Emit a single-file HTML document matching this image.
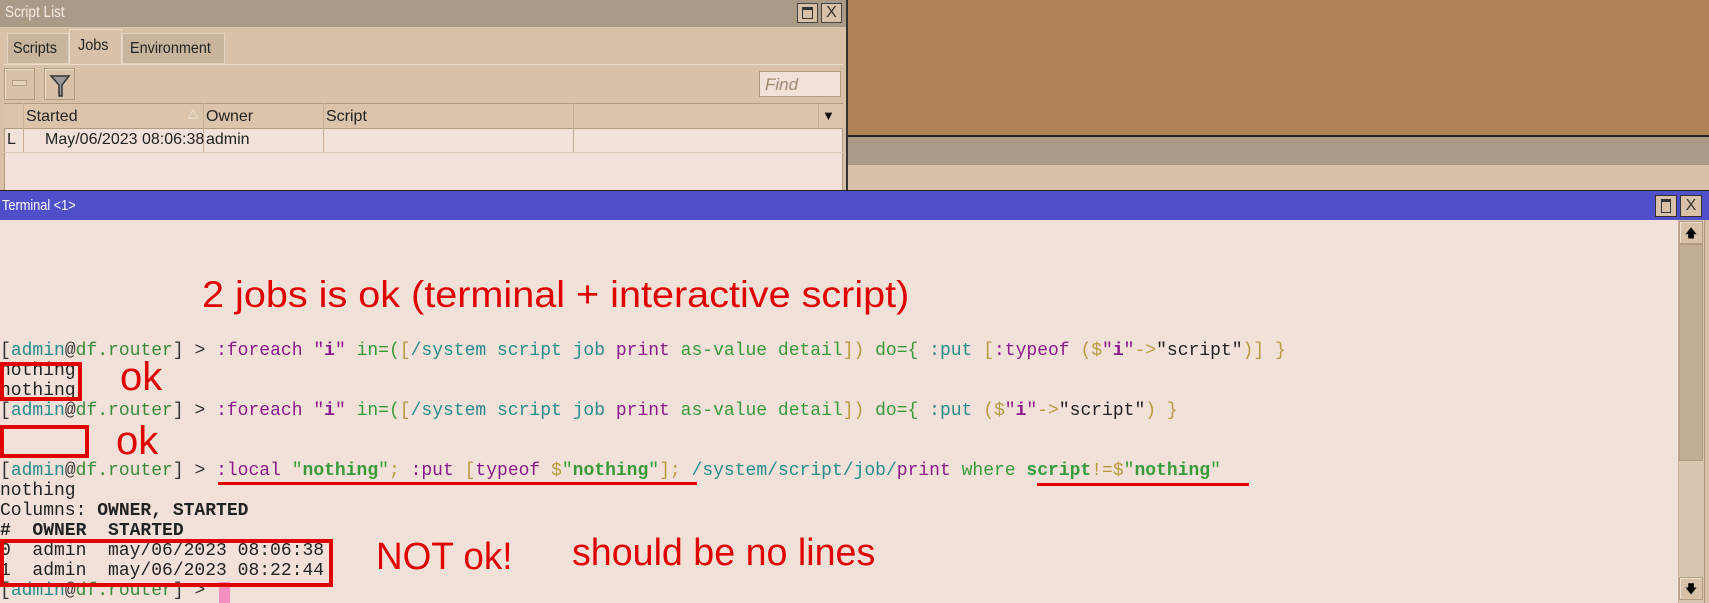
<!DOCTYPE html>
<html><head><meta charset="utf-8"><style>
*{margin:0;padding:0;box-sizing:border-box}
body{width:1709px;height:603px;position:relative;overflow:hidden;background:#d9c1a9;font-family:"Liberation Sans",sans-serif}
.a{position:absolute}
.t{font-family:"Liberation Mono",monospace;font-size:18px;line-height:20px;white-space:pre;color:#222;left:0}
.p{color:#333}.ad{color:#2a8c8c}.dr{color:#3a8a3a}.pu{color:#8b1a8b}.gr{color:#3a9a3a}.ol{color:#b89a40}.te{color:#2a8c8c}
b{font-weight:bold}
.ann{color:#e00000;font-family:"Liberation Sans Narrow","Liberation Sans",sans-serif;white-space:nowrap}
.rb{border:4px solid #e00000}
.btn{background:#d9c1a9;border:1px solid #b09a80;box-shadow:inset 1px 1px 0 #f0e0d0}
</style></head><body>
<div class="a" style="left:848px;top:0;width:861px;height:135px;background:#b08154"></div>
<div class="a" style="left:848px;top:135px;width:861px;height:2px;background:#222"></div>
<div class="a" style="left:848px;top:137px;width:861px;height:28px;background:#ab9a86"></div>
<div class="a" style="left:848px;top:165px;width:861px;height:25px;background:#d9c1a9"></div>

<div class="a" style="left:0;top:0;width:848px;height:190px;background:#d9c1a9;border-right:2px solid #333"></div>
<div class="a" style="left:0;top:0;width:846px;height:27px;background:#ab9a86"></div>
<div class="a" style="left:5px;top:4px;color:#f4ece4;font-size:16px;transform:scaleX(.85);transform-origin:left">Script List</div>
<div class="a" style="left:797px;top:3px;width:21px;height:20px;border:1px solid #444;background:#d9c1a9"><div style="margin:3px 4px;height:12px;border:1px solid #333;border-top:3px solid #333"></div></div>
<div class="a" style="left:821px;top:3px;width:21px;height:20px;border:1px solid #444;background:#d9c1a9;font-size:16px;text-align:center;line-height:18px;color:#333">X</div>
<div class="a" style="left:7px;top:33px;width:62px;height:31px;background:#c9b49d;border:1px solid #e4d2c0"></div>
<div class="a" style="left:13px;top:40px;font-size:16px;color:#222;transform:scaleX(.9);transform-origin:left">Scripts</div>
<div class="a" style="left:69px;top:29px;width:53px;height:36px;background:#d9c1a9;border:1px solid #eadbcb;border-bottom:none"></div>
<div class="a" style="left:78px;top:37px;font-size:16px;color:#222;transform:scaleX(.9);transform-origin:left">Jobs</div>
<div class="a" style="left:122px;top:33px;width:103px;height:31px;background:#c9b49d;border:1px solid #e4d2c0"></div>
<div class="a" style="left:130px;top:40px;font-size:16px;color:#222;transform:scaleX(.9);transform-origin:left">Environment</div>
<div class="a" style="left:3px;top:64px;width:840px;height:1px;background:#eadbcb"></div>
<div class="a btn" style="left:4px;top:68px;width:31px;height:32px"><div style="margin:11px 7px 0;height:6px;border:1px solid #b09a80;background:#e6d2b8"></div></div>
<div class="a btn" style="left:44px;top:68px;width:31px;height:32px">
<svg width="31" height="32" viewBox="0 0 31 32"><path d="M6 7 H24 L17 16 V27 H14 V16 Z" fill="#999" stroke="#333" stroke-width="1.5"/></svg></div>
<div class="a" style="left:759px;top:71px;width:82px;height:26px;background:#f2e1d9;border:1px solid #b09a80;font-style:italic;color:#a08870;font-size:17px;padding:3px 0 0 5px">Find</div>
<div class="a" style="left:4px;top:103px;width:839px;height:87px;background:#f2e1d9;border-left:1px solid #b09a80;border-right:1px solid #b09a80"></div>
<div class="a" style="left:4px;top:103px;width:839px;height:26px;background:#dcc4ab;border-top:1px solid #b09a80;border-bottom:1px solid #b09a80"></div>
<div class="a" style="left:23px;top:103px;width:1px;height:49px;background:#c8ae94"></div>
<div class="a" style="left:203px;top:103px;width:1px;height:49px;background:#c8ae94"></div>
<div class="a" style="left:323px;top:103px;width:1px;height:49px;background:#c8ae94"></div>
<div class="a" style="left:573px;top:103px;width:1px;height:49px;background:#c8ae94"></div>
<div class="a" style="left:818px;top:103px;width:1px;height:26px;background:#c8ae94"></div>
<div class="a" style="left:4px;top:152px;width:839px;height:1px;background:#dccbbb"></div>
<div class="a" style="left:26px;top:108px;font-size:16px;color:#222">Started</div>
<div class="a" style="left:188px;top:105px;font-size:13px;color:#f0e4d8">△</div>
<div class="a" style="left:206px;top:108px;font-size:16px;color:#222">Owner</div>
<div class="a" style="left:326px;top:108px;font-size:16px;color:#222">Script</div>
<div class="a" style="left:822px;top:108px;font-size:13px;color:#111">▼</div>
<div class="a" style="left:7px;top:131px;font-size:16px;color:#222">L</div>
<div class="a" style="left:45px;top:131px;font-size:16px;color:#222">May/06/2023 08:06:38</div>
<div class="a" style="left:206px;top:131px;font-size:16px;color:#222">admin</div>

<div class="a" style="left:0;top:190px;width:1709px;height:1px;background:#222"></div>
<div class="a" style="left:0;top:191px;width:1709px;height:29px;background:#4f50c9"></div>
<div class="a" style="left:2px;top:197px;color:#fff;font-size:15px;transform:scaleX(.85);transform-origin:left">Terminal &lt;1&gt;</div>
<div class="a" style="left:1655px;top:195px;width:22px;height:22px;border:1px solid #333;background:#d9c1a9"><div style="margin:3px 5px;height:14px;border:1px solid #333;border-top:3px solid #333"></div></div>
<div class="a" style="left:1680px;top:195px;width:22px;height:22px;border:1px solid #333;background:#d9c1a9;font-size:16px;text-align:center;line-height:20px;color:#333">X</div>
<div class="a" style="left:0;top:220px;width:1704px;height:383px;background:#f2e1d9"></div>
<div class="a" style="left:1704px;top:220px;width:5px;height:383px;background:#d9c1a9;border-left:1px solid #b09a80"></div>
<div class="a" style="left:1678px;top:220px;width:26px;height:383px;background:#d9c5b0;border-left:1px solid #c8ae94"></div>
<div class="a" style="left:1679px;top:244px;width:24px;height:217px;background:#c4ad96;border:1px solid #b09a80"></div>
<div class="a btn" style="left:1679px;top:221px;width:24px;height:23px;font-size:12px;text-align:center;line-height:22px;color:#000">🡅</div>
<div class="a btn" style="left:1679px;top:577px;width:24px;height:23px;font-size:12px;text-align:center;line-height:22px;color:#000">🡇</div>

<div class="a t" style="top:341px"><span class="p">[</span><span class="ad">admin</span><span class="p">@</span><span class="dr">df.router</span><span class="p">] &gt; </span><span class="pu">:foreach</span> <span class="pu">"<b>i</b>"</span> <span class="gr">in=(</span><span class="ol">[</span><span class="te">/system script job</span> <span class="pu">print</span> <span class="gr">as-value detail</span><span class="ol">])</span> <span class="gr">do={</span> <span class="te">:put</span> <span class="ol">[</span><span class="pu">:typeof</span> <span class="ol">($</span><span class="pu">"<b>i</b>"</span><span class="ol">-&gt;</span>"script"<span class="ol">)]</span> <span class="ol">}</span></div>
<div class="a t" style="top:361px">nothing</div>
<div class="a t" style="top:381px">nothing</div>
<div class="a t" style="top:401px"><span class="p">[</span><span class="ad">admin</span><span class="p">@</span><span class="dr">df.router</span><span class="p">] &gt; </span><span class="pu">:foreach</span> <span class="pu">"<b>i</b>"</span> <span class="gr">in=(</span><span class="ol">[</span><span class="te">/system script job</span> <span class="pu">print</span> <span class="gr">as-value detail</span><span class="ol">])</span> <span class="gr">do={</span> <span class="te">:put</span> <span class="ol">($</span><span class="pu">"<b>i</b>"</span><span class="ol">-&gt;</span>"script"<span class="ol">)</span> <span class="ol">}</span></div>
<div class="a t" style="top:461px"><span class="p">[</span><span class="ad">admin</span><span class="p">@</span><span class="dr">df.router</span><span class="p">] &gt; </span><span class="pu">:local</span> <span class="gr">"<b>nothing</b>"</span><span class="ol">;</span> <span class="pu">:put</span> <span class="ol">[</span><span class="pu">typeof</span> <span class="ol">$</span><span class="gr">"<b>nothing</b>"</span><span class="ol">];</span> <span class="te">/system/script/job/</span><span class="pu">print</span> <span class="gr">where</span> <span class="gr"><b>script</b></span><span class="ol">!=$</span><span class="gr">"<b>nothing</b>"</span></div>
<div class="a t" style="top:481px">nothing</div>
<div class="a t" style="top:501px">Columns: <b>OWNER, STARTED</b></div>
<div class="a t" style="top:521px"><b>#  OWNER  STARTED</b></div>
<div class="a t" style="top:541px">0  admin  may/06/2023 08:06:38</div>
<div class="a t" style="top:561px">1  admin  may/06/2023 08:22:44</div>
<div class="a t" style="top:581px"><span class="p">[</span><span class="ad">admin</span><span class="p">@</span><span class="dr">df.router</span><span class="p">] &gt; </span></div>
<div class="a" style="left:219px;top:582px;width:11px;height:21px;background:#f58fc0"></div>

<div class="a ann" style="left:202px;top:274px;font-size:37px;transform:scaleX(1.07);transform-origin:left">2 jobs is ok (terminal + interactive script)</div>
<div class="a ann" style="left:120px;top:355px;font-size:40px">ok</div>
<div class="a ann" style="left:116px;top:419px;font-size:40px">ok</div>
<div class="a ann" style="left:376px;top:536px;font-size:38px;transform:scaleX(.97);transform-origin:left">NOT ok!</div>
<div class="a ann" style="left:572px;top:532px;font-size:38px;transform:scaleX(.99);transform-origin:left">should be no lines</div>
<div class="a rb" style="left:0;top:362px;width:82px;height:39px"></div>
<div class="a rb" style="left:0;top:425px;width:89px;height:33px"></div>
<div class="a rb" style="left:0;top:539px;width:333px;height:48px"></div>
<div class="a" style="left:218px;top:482px;width:479px;height:3px;background:#e00000"></div>
<div class="a" style="left:1037px;top:483px;width:212px;height:3px;background:#e00000"></div>
</body></html>
